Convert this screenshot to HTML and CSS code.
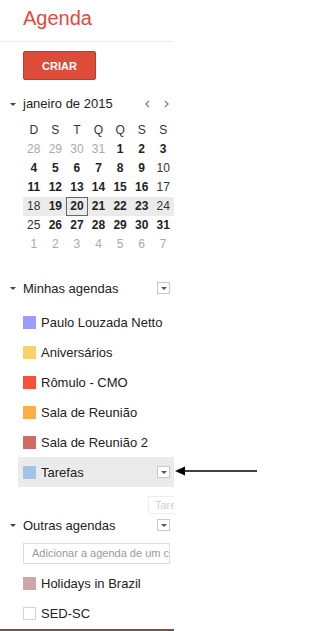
FILE: index.html
```html
<!DOCTYPE html>
<html lang="pt">
<head>
<meta charset="utf-8">
<title>Agenda</title>
<link rel="stylesheet" href="styles.css">
</head>
<body>
<div class="app">
  <aside class="sidebar">
    <header class="brand">Agenda</header>
    <button class="create">CRIAR</button>

    <div class="month-bar">
      <span class="caret"></span>
      <span class="month-title">janeiro de 2015</span>
      <span class="nav">
        <svg width="5" height="8" viewBox="0 0 5 8"><path d="M4 1 L1 4 L4 7" fill="none" stroke="#888" stroke-width="1.4"/></svg>
        <svg width="5" height="8" viewBox="0 0 5 8"><path d="M1 1 L4 4 L1 7" fill="none" stroke="#888" stroke-width="1.4"/></svg>
      </span>
    </div>

    <div class="minical">
      <div class="week head"><span>D</span><span>S</span><span>T</span><span>Q</span><span>Q</span><span>S</span><span>S</span></div>
      <div class="week"><span class="off">28</span><span class="off">29</span><span class="off">30</span><span class="off">31</span><span class="b">1</span><span class="b">2</span><span class="b">3</span></div>
      <div class="week"><span class="b">4</span><span class="b">5</span><span class="b">6</span><span class="b">7</span><span class="b">8</span><span class="b">9</span><span>10</span></div>
      <div class="week"><span class="b">11</span><span class="b">12</span><span class="b">13</span><span class="b">14</span><span class="b">15</span><span class="b">16</span><span>17</span></div>
      <div class="week current"><span>18</span><span class="b">19</span><span class="b today">20</span><span class="b">21</span><span class="b">22</span><span class="b">23</span><span>24</span></div>
      <div class="week"><span>25</span><span class="b">26</span><span class="b">27</span><span class="b">28</span><span class="b">29</span><span class="b">30</span><span class="b">31</span></div>
      <div class="week"><span class="off">1</span><span class="off">2</span><span class="off">3</span><span class="off">4</span><span class="off">5</span><span class="off">6</span><span class="off">7</span></div>
    </div>

    <div class="section-head mine">
      <span class="caret"></span>
      <span class="section-title">Minhas agendas</span>
      <span class="menu-btn"></span>
    </div>
    <ul class="cal-list first">
      <li class="cal"><span class="swatch c-paulo"></span>Paulo Louzada Netto</li>
      <li class="cal"><span class="swatch c-aniv"></span>Aniversários</li>
      <li class="cal"><span class="swatch c-romulo"></span>Rômulo - CMO</li>
      <li class="cal"><span class="swatch c-sala"></span>Sala de Reunião</li>
      <li class="cal"><span class="swatch c-sala2"></span>Sala de Reunião 2</li>
      <li class="cal hover"><span class="swatch c-tarefas"></span>Tarefas<span class="menu-btn"></span></li>
    </ul>
    <div class="tasks-input">Tare</div>

    <div class="section-head">
      <span class="caret"></span>
      <span class="section-title">Outras agendas</span>
      <span class="menu-btn"></span>
    </div>
    <div class="add-box">Adicionar a agenda de um colega</div>
    <ul class="cal-list">
      <li class="cal"><span class="swatch c-holidays"></span>Holidays in Brazil</li>
      <li class="cal"><span class="swatch c-sed"></span>SED-SC</li>
    </ul>
  </aside>

  <svg class="pointer" width="84" height="12" viewBox="0 0 84 12">
    <line x1="7" y1="6" x2="82" y2="6" stroke="#000" stroke-width="1.6"/>
    <path d="M0 6 L10 1.5 L10 10.5 Z" fill="#000"/>
  </svg>
</div>
</body>
</html>
```

FILE: styles.css
```css
* { box-sizing: border-box; }

html, body {
  margin: 0;
  padding: 0;
  background: #fff;
}

body {
  font-family: "Liberation Sans", Arial, sans-serif;
  color: #222;
  width: 258px;
  height: 631px;
  overflow: hidden;
}

.app {
  position: relative;
  width: 258px;
  height: 631px;
}

.sidebar {
  width: 174px;
  height: 631px;
  overflow: hidden;
  border-bottom: 2px solid #6b574c;
  display: flex;
  flex-direction: column;
}

.brand {
  height: 42px;
  padding: 6px 0 0 23px;
  font-size: 20px;
  line-height: 24px;
  color: #dd4b39;
  border-bottom: 1px solid #ebebeb;
  flex: none;
}

.create {
  flex: none;
  margin: 9px 0 0 23px;
  width: 73px;
  height: 29px;
  padding: 0;
  border: 1px solid #c6392a;
  border-radius: 2px;
  background: #dd4b39;
  color: #fff;
  font-family: "Liberation Sans", Arial, sans-serif;
  font-weight: bold;
  font-size: 11px;
  text-align: center;
}

.month-bar {
  flex: none;
  margin-top: 15px;
  height: 18px;
  display: flex;
  align-items: center;
  font-size: 13px;
  line-height: 18px;
  color: #222;
}

.caret {
  width: 0;
  height: 0;
  margin: 1px 7px 0 10px;
  border-left: 3px solid transparent;
  border-right: 3px solid transparent;
  border-top: 3px solid #444;
  flex: none;
}

.month-title { flex: 1; }

.nav {
  display: flex;
  gap: 14px;
  margin-right: 5px;
  align-items: center;
}
.nav svg { display: block; }

.minical {
  flex: none;
  margin: 8px 0 0 23px;
  width: 151px;
  font-size: 12px;
}

.week {
  display: grid;
  grid-template-columns: repeat(7, 1fr);
  height: 19px;
  line-height: 19px;
  text-align: center;
  color: #333;
}

.week span { display: block; }
.week .b { font-weight: bold; color: #222; }
.week .off { color: #aaa; }
.week.current { background: #ebebeb; }
.week .today {
  border: 1px solid #666;
  line-height: 17px;
}

.section-head {
  flex: none;
  display: flex;
  align-items: center;
  height: 20px;
  font-size: 13px;
  color: #222;
  margin-top: 1px;
}
.section-head.mine { margin-top: 24px; }
.section-title { flex: 1; }

.menu-btn {
  flex: none;
  position: relative;
  width: 13px;
  height: 12px;
  margin-right: 4px;
  border: 1px solid #c8c8c8;
  background: #fff;
}
.menu-btn::after {
  content: "";
  position: absolute;
  left: 3px;
  top: 4px;
  border-left: 3px solid transparent;
  border-right: 3px solid transparent;
  border-top: 3px solid #555;
}

.cal-list {
  list-style: none;
  margin: 0;
  padding: 0;
  flex: none;
}
.cal-list.first { margin-top: 9px; }

.cal {
  display: flex;
  align-items: center;
  height: 30px;
  margin-left: 18px;
  padding-left: 5px;
  font-size: 13px;
  color: #222;
  white-space: nowrap;
}
.cal.hover { background: #ebebeb; }
.cal .menu-btn { margin-left: auto; }

.swatch {
  flex: none;
  width: 13px;
  height: 13px;
  margin-right: 5px;
}
.c-paulo { background: #9c9cf9; }
.c-aniv { background: #fad165; }
.c-romulo { background: #f5523a; }
.c-sala { background: #ffad46; }
.c-sala2 { background: #d06b64; }
.c-tarefas { background: #9fc6e7; }
.c-holidays { background: #cca6ac; }
.c-sed { background: #fff; border: 1px solid #d4d4d4; }

.tasks-input {
  flex: none;
  margin: 9px 0 0 148px;
  width: 60px;
  height: 18px;
  border: 1px solid #eee;
  padding-left: 6px;
  font-size: 11px;
  line-height: 16px;
  color: #d0d0d0;
  white-space: nowrap;
}

.add-box {
  flex: none;
  margin: 8px 0 4px 23px;
  width: 147px;
  height: 21px;
  border: 1px solid #dcdcdc;
  padding-left: 8px;
  font-size: 11px;
  line-height: 19px;
  color: #9a9a9a;
  white-space: nowrap;
  overflow: hidden;
}

.pointer {
  position: absolute;
  left: 175px;
  top: 465px;
}
```
